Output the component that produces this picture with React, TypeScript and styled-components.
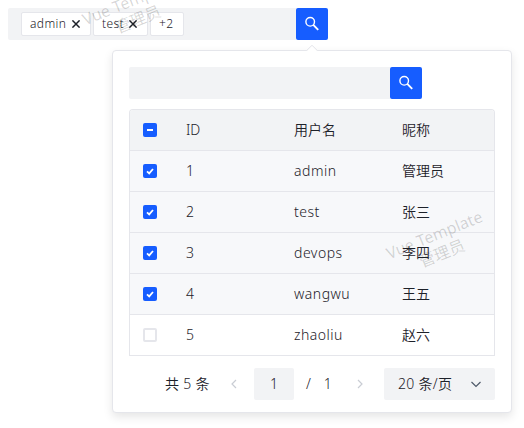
import React from 'react';
import styled, { createGlobalStyle } from 'styled-components';

const GlobalStyle = createGlobalStyle`
  * { box-sizing: border-box; }
  html, body { margin: 0; background: #fff; overflow: hidden; }
  body {
    font-family: "Noto Sans", "Noto Sans CJK SC", sans-serif;
    font-size: 14px;
    font-weight: 350;
    line-height: 22px;
    color: #1d2129;
  }
`;

const Page = styled.div`
  position: relative;
  width: 524px;
  height: 428px;
  padding: 8px;
  overflow: hidden;
`;

const SearchBar = styled.div<{ $width: number }>`
  display: flex;
  width: ${(p) => p.$width}px;
  height: 32px;
`;

const Field = styled.div`
  display: flex;
  flex: 1;
  align-items: center;
  gap: 2px;
  padding-left: 13px;
  background: #f2f3f5;
  border-radius: 2px 0 0 2px;
`;

const SearchButton = styled.button`
  display: flex;
  align-items: center;
  justify-content: center;
  width: 32px;
  height: 32px;
  padding: 0;
  border: 0;
  border-radius: 2px;
  background: #165dff;
  color: #fff;
`;

const Tag = styled.span<{ $width: number }>`
  display: flex;
  align-items: center;
  justify-content: space-between;
  width: ${(p) => p.$width}px;
  height: 24px;
  padding: 0 10px 0 8px;
  border: 1px solid #e5e6eb;
  border-radius: 2px;
  background: #fff;
  font-size: 12px;
  line-height: 24px;
  letter-spacing: 0.4px;
  white-space: nowrap;
`;

const Popup = styled.div`
  position: absolute;
  left: 112px;
  top: 50px;
  width: 400px;
  height: 363px;
  padding: 16px;
  border: 1px solid #e5e6eb;
  border-radius: 4px;
  background: #fff;
  box-shadow: 0 4px 10px rgba(0, 0, 0, 0.1);
`;

const Arrow = styled.div`
  position: absolute;
  left: 195px;
  top: -5px;
  width: 8px;
  height: 8px;
  border: 1px solid #e5e6eb;
  border-right: 0;
  border-bottom: 0;
  border-radius: 2px 0 0 0;
  background: #fff;
  transform: rotate(45deg);
`;

const Table = styled.div`
  margin-top: 10px;
  border: 1px solid #e5e6eb;
  border-bottom: 0;
  border-radius: 4px 4px 0 0;
  overflow: hidden;
`;

const Row = styled.div<{ $tone: string }>`
  display: grid;
  grid-template-columns: 40px repeat(3, 108px);
  height: 41px;
  align-items: center;
  border-bottom: 1px solid #e5e6eb;
  background: ${(p) => p.$tone};
`;

const Cell = styled.div<{ $tracking?: number }>`
  padding-left: 16px;
  letter-spacing: ${(p) => p.$tracking ?? 0}px;
  white-space: nowrap;
`;

const Check = styled.span<{ $on: boolean }>`
  display: block;
  width: 14px;
  height: 14px;
  margin-left: 13px;
  border: ${(p) => (p.$on ? '0' : '2px solid #e5e6eb')};
  border-radius: 2px;
  background: ${(p) => (p.$on ? '#165dff' : '#fff')};

  svg { display: block; }
`;

const Pagination = styled.div`
  display: flex;
  align-items: center;
  height: 32px;
  margin: 12px 0 0 36px;
  white-space: nowrap;
`;

const Total = styled.span`
  width: 53px;
  letter-spacing: 0.3px;
`;

const Step = styled.span`
  display: flex;
  justify-content: center;
  width: 32px;
`;

const PageInput = styled.span`
  width: 40px;
  height: 32px;
  margin-left: 4px;
  border-radius: 2px;
  background: #f2f3f5;
  line-height: 32px;
  text-align: center;
`;

const PageCount = styled.span`
  display: flex;
  gap: 13px;
  width: 50px;
  padding-left: 12px;
`;

const SizeSelect = styled.span`
  display: flex;
  align-items: center;
  justify-content: space-between;
  width: 111px;
  height: 32px;
  margin-left: auto;
  padding: 0 13px 0 14px;
  border-radius: 2px;
  background: #f2f3f5;
  letter-spacing: 0.3px;
`;

const Watermark = styled.div<{ $x: number; $y: number }>`
  position: absolute;
  left: ${(p) => p.$x - 60}px;
  top: ${(p) => p.$y - 20}px;
  width: 120px;
  color: rgba(0, 0, 0, 0.16);
  font-size: 16px;
  font-weight: 400;
  line-height: 20px;
  text-align: center;
  transform: rotate(-22deg);
  pointer-events: none;
`;

const SearchIcon = () => (
  <svg width="16" height="16" viewBox="0 0 16 16" fill="none" stroke="currentColor" strokeWidth="1.4">
    <circle cx="6.2" cy="5.8" r="4.3" />
    <path d="M9.3 8.9 14.2 13.8" strokeWidth="1.9" />
  </svg>
);

const CloseIcon = () => (
  <svg width="8" height="8" viewBox="0 0 8 8" stroke="#1d2129" strokeWidth="1.5">
    <path d="M.4.4 7.6 7.6M7.6.4.4 7.6" />
  </svg>
);

const Chevron = ({ d, color }: { d: string; color: string }) => (
  <svg width="12" height="12" viewBox="0 0 12 12" fill="none" stroke={color} strokeWidth="1.2">
    <path d={d} />
  </svg>
);

const CheckMark = ({ partial }: { partial?: boolean }) => (
  <svg width="14" height="14" viewBox="0 0 14 14" fill="none" stroke="#fff" strokeWidth={partial ? 2 : 1.8}>
    <path d={partial ? 'M4 7H10' : 'M4 7.4 6.2 9.4 10 5'} />
  </svg>
);

const users = [
  { id: 1, name: 'admin', nick: '管理员', checked: true },
  { id: 2, name: 'test', nick: '张三', checked: true },
  { id: 3, name: 'devops', nick: '李四', checked: true },
  { id: 4, name: 'wangwu', nick: '王五', checked: true },
  { id: 5, name: 'zhaoliu', nick: '赵六', checked: false },
];

export default function App() {
  return (
    <Page>
      <GlobalStyle />
      <SearchBar $width={320}>
        <Field>
          <Tag $width={70}>admin<CloseIcon /></Tag>
          <Tag $width={55}>test<CloseIcon /></Tag>
          <Tag $width={34}>+2</Tag>
        </Field>
        <SearchButton aria-label="search"><SearchIcon /></SearchButton>
      </SearchBar>
      <Popup>
        <Arrow />
        <SearchBar $width={293}>
          <Field />
          <SearchButton aria-label="search"><SearchIcon /></SearchButton>
        </SearchBar>
        <Table>
          <Row $tone="#f2f3f5">
            <Check $on><CheckMark partial /></Check>
            <Cell>ID</Cell>
            <Cell>用户名</Cell>
            <Cell>昵称</Cell>
          </Row>
          {users.map((u) => (
            <Row key={u.id} $tone={u.checked ? '#f7f8fa' : '#fff'}>
              <Check $on={u.checked}>{u.checked && <CheckMark />}</Check>
              <Cell>{u.id}</Cell>
              <Cell $tracking={0.5}>{u.name}</Cell>
              <Cell>{u.nick}</Cell>
            </Row>
          ))}
        </Table>
        <Pagination>
          <Total>共 5 条</Total>
          <Step><Chevron d="M8 2 4 6 8 10" color="#c9cdd4" /></Step>
          <PageInput>1</PageInput>
          <PageCount><span>/</span><span>1</span></PageCount>
          <Step><Chevron d="M4 2 8 6 4 10" color="#c9cdd4" /></Step>
          <SizeSelect>20 条/页<Chevron d="M1.5 4 6 8.5 10.5 4" color="#4e5969" /></SizeSelect>
        </Pagination>
      </Popup>
      <Watermark $x={438} $y={244}>Vue Template<br />管理员</Watermark>
      <Watermark $x={134} $y={10}>Vue Template<br />管理员</Watermark>
    </Page>
  );
}
